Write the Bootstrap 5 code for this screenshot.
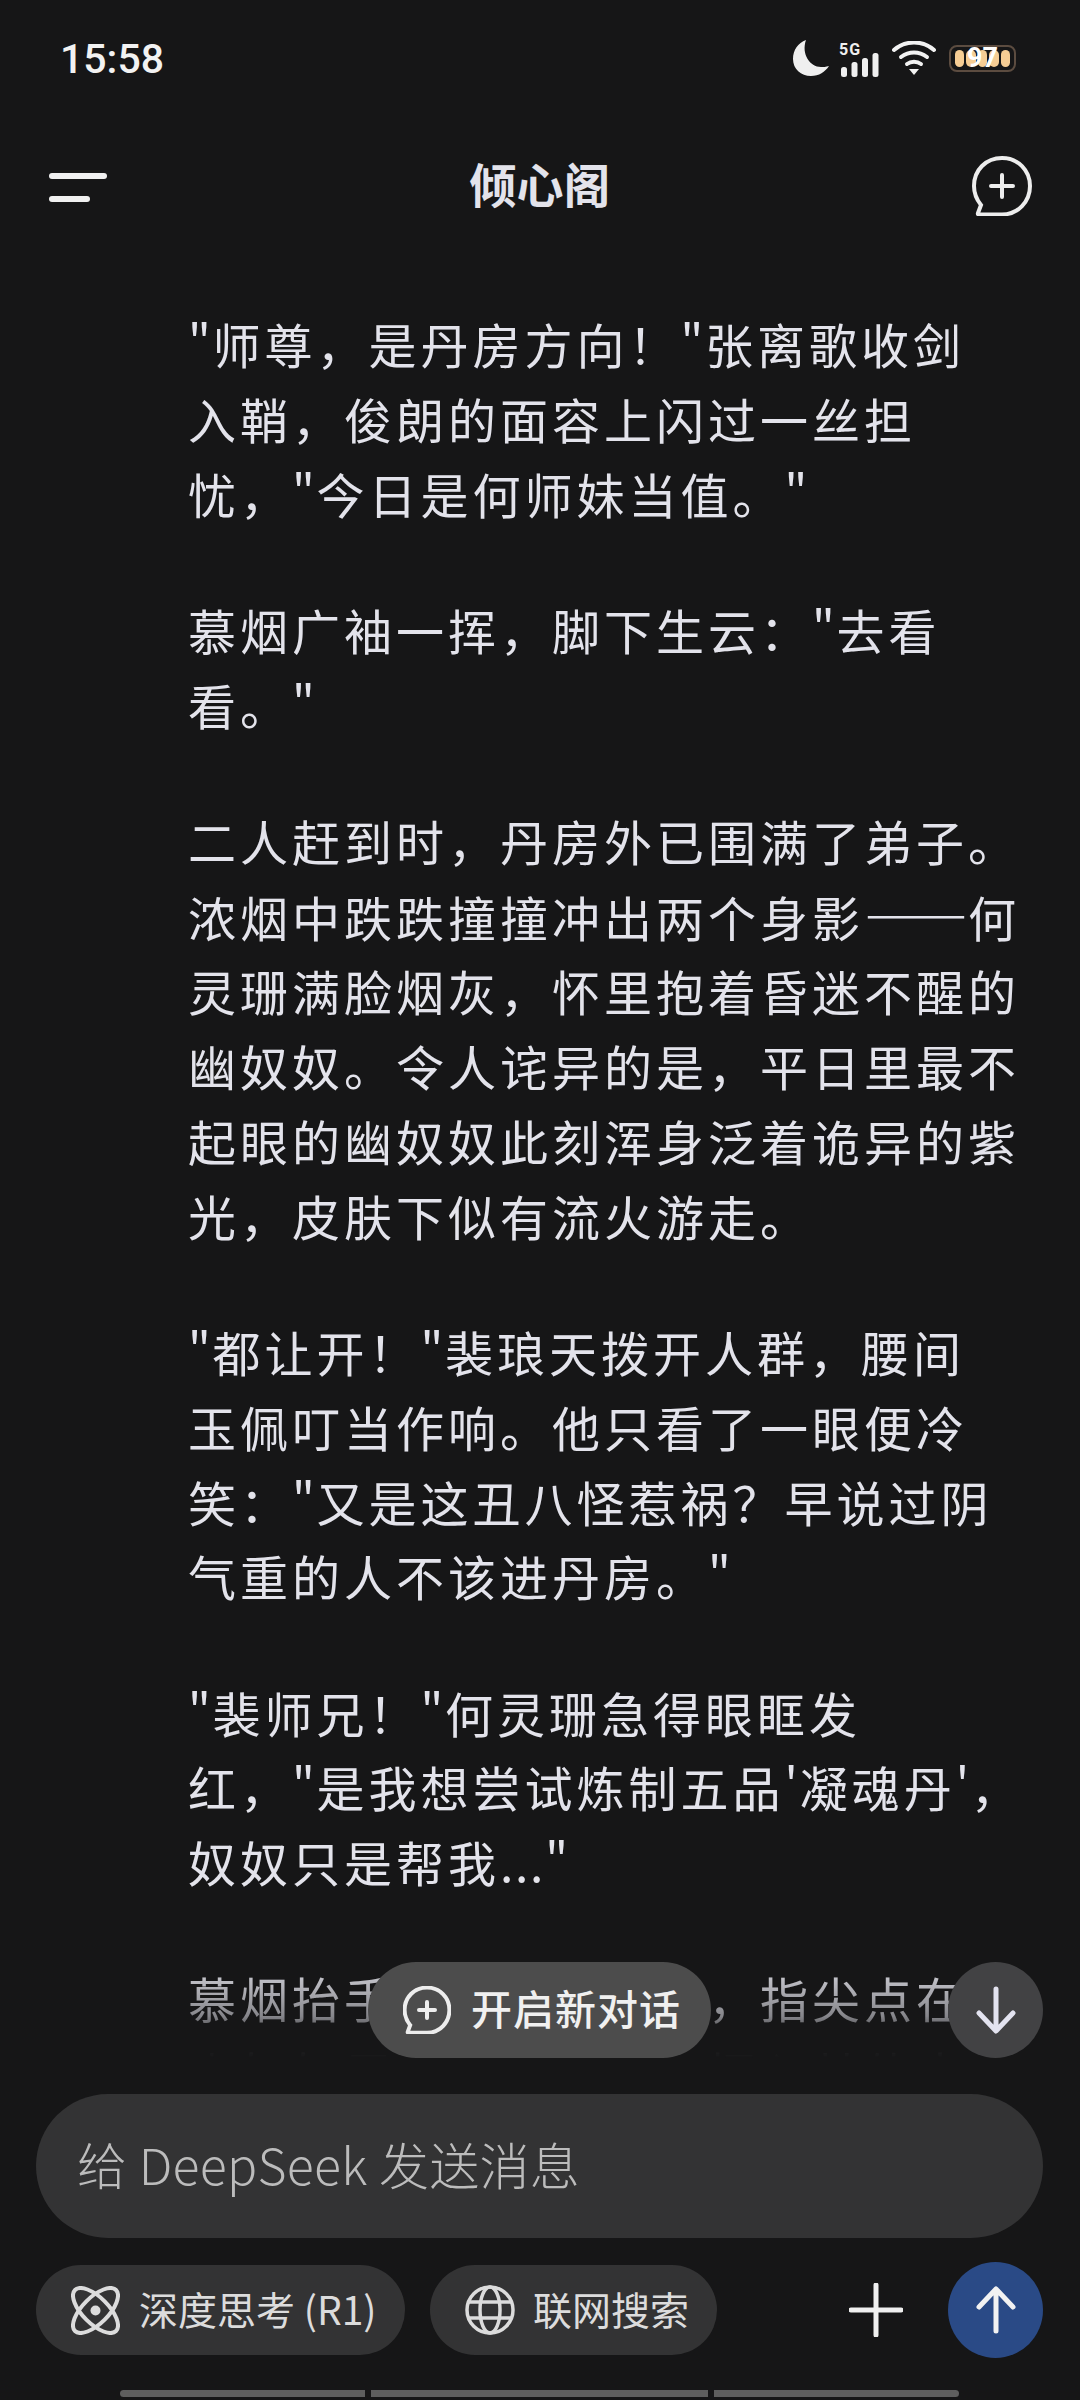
<!DOCTYPE html>
<html lang="zh-CN">

<head>
    <meta charset="UTF-8">
    <meta name="viewport" content="width=device-width, initial-scale=1.0">
    <title>倾心阁</title>
    <link href="https://cdn.jsdelivr.net/npm/bootstrap@5.3.0/dist/css/bootstrap.min.css" rel="stylesheet">
    <style>
        html, body { margin: 0; background: #161617; }
        body { font-family: "Noto Sans CJK SC", "Noto Sans", sans-serif; }
        .app-shell { width: 1080px; height: 2400px; background: #161617; overflow: hidden; padding-bottom: 3px; }

        /* status bar */
        .status-row { height: 116px; padding: 0 64px 0 60px; }
        .clock-text { font-family: Roboto, sans-serif; font-size: 41px; font-weight: 500; color: #f2f2f2; line-height: 1; margin-top: 2px; }
        .sig-icon { margin-left: 10px; }
        .wifi-icon { margin-left: 12px; }
        .batt-wrap { margin-left: 13px; }
        .batt-box { width: 67px; height: 27px; border: 2px solid #5c4c40; border-radius: 8px; padding: 3px 4px; gap: 2px; }
        .batt-cell { flex: 1; background: #f6cd94; border-radius: 5px; }
        .batt-num { position: absolute; inset: 0; font-family: Roboto, sans-serif; font-size: 27px; font-weight: 700; color: #fff; line-height: 27px; text-align: center; }

        /* header */
        .head-row { height: 140px; padding: 0 48px; }
        .head-title { font-size: 47px; font-weight: 700; color: #e3e3eb; line-height: 1; margin-bottom: 8px; }

        /* conversation */
        .chat-area { flex: 1; min-height: 0; }
        .chat-text {
            height: 100%; overflow: hidden; padding: 50px 0 0 188px;
            font-size: 48px; line-height: 74.8px; letter-spacing: 4px; color: #e3e3eb; white-space: nowrap;
            -webkit-mask-image: linear-gradient(to bottom, #000 0, #000 1700px, rgba(0,0,0,.85) 1720px, rgba(0,0,0,.55) 1760px, rgba(0,0,0,.1) 1785px, rgba(0,0,0,0) 1802px);
            mask-image: linear-gradient(to bottom, #000 0, #000 1700px, rgba(0,0,0,.85) 1720px, rgba(0,0,0,.55) 1760px, rgba(0,0,0,.1) 1785px, rgba(0,0,0,0) 1802px);
        }
        .chat-text p { margin: 0 0 61.4px; }
        .qt { letter-spacing: 1.7px; }
        .long-dash { font-size: 52px; font-weight: 700; letter-spacing: 0; }
        .new-chat-pill { position: absolute; left: 368px; bottom: 0; width: 343px; height: 96px; border-radius: 48px; background: #4c4c4c; padding-left: 35px; gap: 20px; }
        .new-chat-pill span { font-size: 41px; font-weight: 500; color: #f0f0f0; letter-spacing: 1px; line-height: 1; margin-bottom: 5px; }
        .down-btn { position: absolute; left: 948px; bottom: 0; width: 95px; height: 96px; border-radius: 50%; background: #424244; }

        /* composer */
        .composer-box { height: 144px; margin: 36px 37px 0 36px; border-radius: 72px; background: #333334; padding-left: 41px; }
        .composer-box span { font-size: 50px; font-weight: 300; color: #bcbcbc; line-height: 1; letter-spacing: .3px; margin-bottom: 6px; }
        .tool-row { margin: 24px 37px 0 36px; height: 96px; }
        .tool-chip { height: 90px; border-radius: 45px; background: #333334; }
        .tool-chip span { font-size: 39px; color: #dcdcdc; line-height: 1; margin-bottom: 4px; }
        .chip-think { width: 369px; padding-left: 35px; gap: 19px; }
        .chip-web { width: 287px; padding-left: 35px; gap: 18px; margin-left: 25px; }
        .send-btn { width: 95px; height: 96px; border-radius: 50%; background: #2a4a86; margin-left: 45px; }

        /* home indicator */
        .home-row { margin: 32px 0 0 120px; gap: 6px; }
        .home-seg { height: 7px; background: #5e5e5e; }
    </style>
</head>

<body>
    <div class="app-shell d-flex flex-column">

        <div class="status-row d-flex align-items-center justify-content-between">
            <div class="clock-text">15:58</div>
            <div class="d-flex align-items-center">
                <svg width="36" height="36" viewBox="0 0 36 36"><path d="M13 0C5 3 0 10 0 19c0 10 8 17 18 17 8 0 14-4 18-10-3 1-6 1-8 1C17 27 8 14 13 0z" fill="#efefef"/></svg>
                <svg width="41" height="37" viewBox="0 0 41 37" class="sig-icon"><text x="0" y="14.500" font-family="Roboto, sans-serif" font-size="16" font-weight="700" letter-spacing="1" fill="#efefef">5G</text><rect x="2" y="27" width="6" height="10" rx="2.500" fill="#efefef"/><rect x="12.500" y="22" width="6" height="15" rx="2.500" fill="#efefef"/><rect x="23" y="18" width="6" height="19" rx="2.500" fill="#efefef"/><rect x="33.500" y="13" width="6" height="24" rx="2.500" fill="#efefef"/></svg>
                <svg width="44" height="35" viewBox="0 0 44 35" class="wifi-icon" fill="none" stroke="#f2f2f2" stroke-width="4" stroke-linecap="round"><path d="M2 9C13-1 31-1 42 9"/><path d="M9 16c8-6 18-6 26 0"/><path d="M15 23c4-3 10-3 14 0"/><path d="M17 28h10l-5 6z" fill="#f2f2f2" stroke="none"/></svg>
                <div class="batt-wrap position-relative">
                    <div class="batt-box d-flex">
                        <i class="batt-cell"></i><i class="batt-cell"></i><i class="batt-cell"></i><i class="batt-cell"></i><i class="batt-cell"></i>
                    </div>
                    <div class="batt-num">97</div>
                </div>
            </div>
        </div>

        <div class="head-row d-flex align-items-center justify-content-between">
            <svg width="60" height="32" viewBox="0 0 60 32"><rect x="1" y="3" width="58" height="6" rx="3" fill="#f0f0f0"/><rect x="1" y="26" width="41" height="6" rx="3" fill="#f0f0f0"/></svg>
            <div class="head-title">倾心阁</div>
            <svg width="60" height="60" viewBox="0 0 60 60" fill="none" stroke="#ededed" stroke-width="4" stroke-linecap="round"><path d="M30 2C14 2 2 14 2 30c0 8 3 14 7 19l-3 8c-.5 1.300.3 1.500 1 1.500h23c16 0 28-13 28-28.500S46 2 30 2z"/><path d="M30 19v22M19 30h22"/></svg>
        </div>

        <div class="chat-area position-relative">
            <div class="chat-text">
                <p><span class="qt">"</span>师尊，是丹房方向！<span class="qt">"</span>张离歌收剑<br>入鞘，俊朗的面容上闪过一丝担<br>忧，<span class="qt">"</span>今日是何师妹当值。<span class="qt">"</span></p>
                <p>慕烟广袖一挥，脚下生云：<span class="qt">"</span>去看<br>看。<span class="qt">"</span></p>
                <p>二人赶到时，丹房外已围满了弟子。<br>浓烟中跌跌撞撞冲出两个身影<span class="long-dash">——</span>何<br>灵珊满脸烟灰，怀里抱着昏迷不醒的<br>幽奴奴。令人诧异的是，平日里最不<br>起眼的幽奴奴此刻浑身泛着诡异的紫<br>光，皮肤下似有流火游走。</p>
                <p><span class="qt">"</span>都让开！<span class="qt">"</span>裴琅天拨开人群，腰间<br>玉佩叮当作响。他只看了一眼便冷<br>笑：<span class="qt">"</span>又是这丑八怪惹祸？早说过阴<br>气重的人不该进丹房。<span class="qt">"</span></p>
                <p><span class="qt">"</span>裴师兄！<span class="qt">"</span>何灵珊急得眼眶发<br>红，<span class="qt">"</span>是我想尝试炼制五品<span class="qt">'</span>凝魂丹<span class="qt">'</span>，<br>奴奴只是帮我<span class="qt">..."</span></p>
                <p>慕烟抬手示意众人噤声，指尖点在<br>幽奴奴眉心，一缕灵气探入其体内</p>
            </div>
            <div class="new-chat-pill d-flex align-items-center">
                <svg width="48" height="48" viewBox="0 0 60 60" fill="none" stroke="#ededed" stroke-width="5" stroke-linecap="round"><path d="M30 2C14 2 2 14 2 30c0 8 3 14 7 19l-3 8c-.5 1.300.3 1.500 1 1.500h23c16 0 28-13 28-28.500S46 2 30 2z"/><path d="M30 20v20M20 30h20"/></svg>
                <span>开启新对话</span>
            </div>
            <div class="down-btn d-flex align-items-center justify-content-center">
                <svg width="40" height="48" viewBox="0 0 40 48" fill="none" stroke="#e3e3f0" stroke-width="5" stroke-linecap="round" stroke-linejoin="round"><path d="M20 3v41M3 27l17 18 17-18"/></svg>
            </div>
        </div>

        <div class="composer-box d-flex align-items-center">
            <span>给 DeepSeek 发送消息</span>
        </div>

        <div class="tool-row d-flex align-items-center">
            <div class="tool-chip chip-think d-flex align-items-center">
                <svg width="49" height="49" viewBox="0 0 49 49" fill="none" stroke="#dcdcdc" stroke-width="4"><ellipse cx="24.500" cy="24.500" rx="29" ry="13" transform="rotate(45 24.500 24.500)"/><ellipse cx="24.500" cy="24.500" rx="29" ry="13" transform="rotate(-45 24.500 24.500)"/><circle cx="24.500" cy="24.500" r="5" fill="#dcdcdc" stroke="none"/></svg>
                <span>深度思考 (R1)</span>
            </div>
            <div class="tool-chip chip-web d-flex align-items-center">
                <svg width="50" height="50" viewBox="0 0 50 50" fill="none" stroke="#dcdcdc" stroke-width="3.500"><circle cx="25" cy="25" r="23"/><ellipse cx="25" cy="25" rx="10" ry="23"/><path d="M4 17h42M4 33h42"/></svg>
                <span>联网搜索</span>
            </div>
            <div class="ms-auto d-flex align-items-center">
                <svg width="54" height="54" viewBox="0 0 54 54" stroke="#f0f0f0" stroke-width="5" stroke-linecap="round"><path d="M27 2v50M2 27h50"/></svg>
                <div class="send-btn d-flex align-items-center justify-content-center">
                    <svg width="40" height="48" viewBox="0 0 40 48" fill="none" stroke="#f2f2f2" stroke-width="5" stroke-linecap="round" stroke-linejoin="round"><path d="M20 45V4M3 21L20 3l17 18"/></svg>
                </div>
            </div>
        </div>

        <div class="home-row d-flex">
            <div class="home-seg" style="width: 245px; border-radius: 4px 0 0 4px;"></div>
            <div class="home-seg" style="width: 337px;"></div>
            <div class="home-seg" style="width: 245px; border-radius: 0 4px 4px 0;"></div>
        </div>

    </div>

    <script src="https://cdn.jsdelivr.net/npm/bootstrap@5.3.0/dist/js/bootstrap.bundle.min.js"></script>
</body>

</html>
